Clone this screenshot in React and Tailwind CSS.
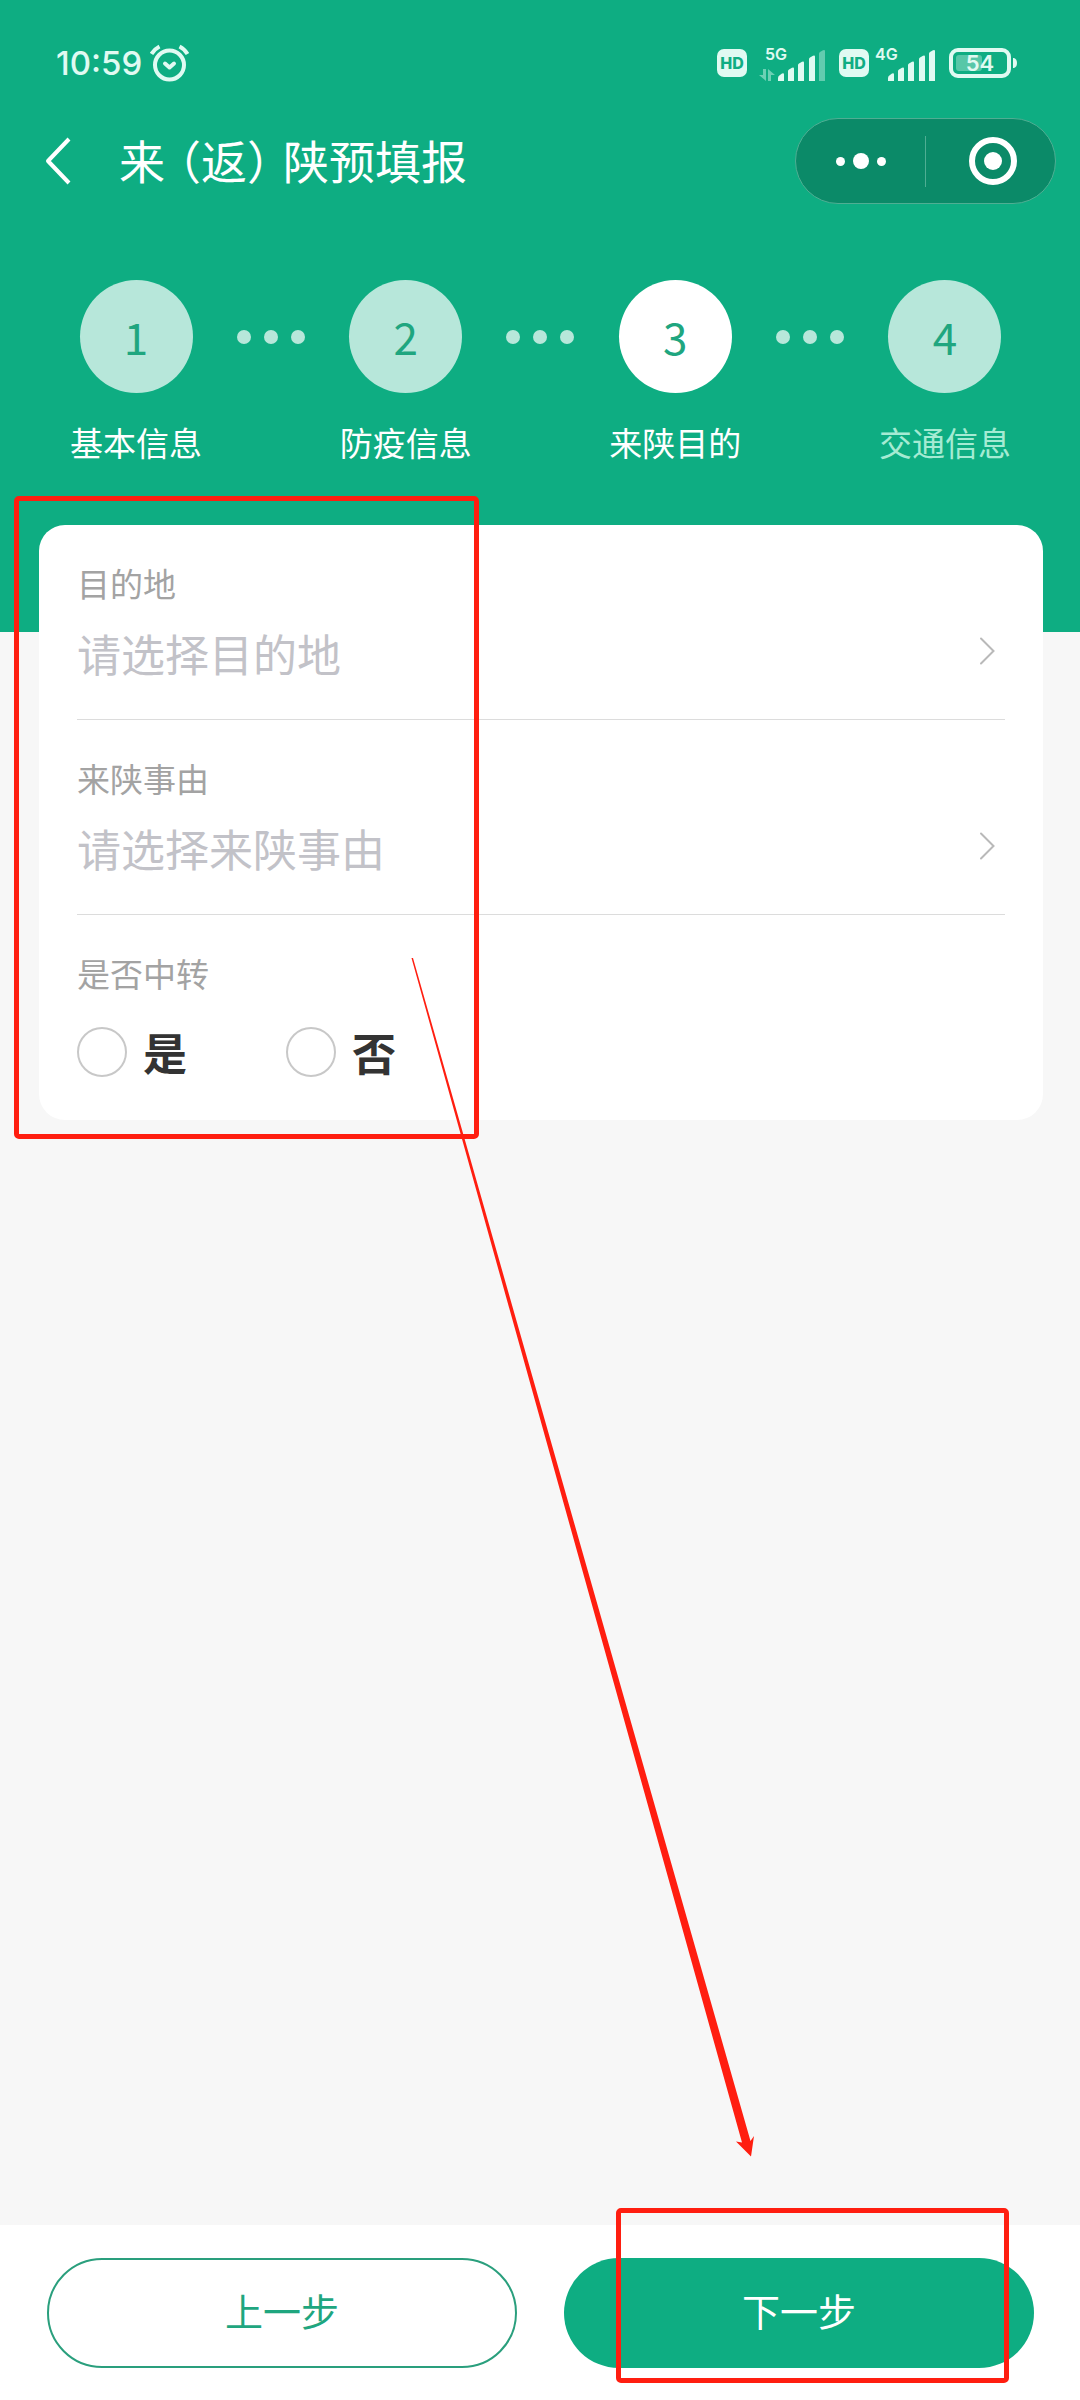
import React, { useState } from 'react';

const steps = [
  { id: 1, label: '基本信息' },
  { id: 2, label: '防疫信息' },
  { id: 3, label: '来陕目的' },
  { id: 4, label: '交通信息' },
];

const CURRENT_STEP = 3;

const AlarmIcon = () => (
  <svg className="w-10 h-[38px]" viewBox="0 0 40 38" fill="none" stroke="currentColor" strokeLinecap="round" strokeLinejoin="round">
    <circle cx="19.500" cy="21" r="14.5" strokeWidth="4" />
    <path d="M15 19.500l4.500 4 4.500-4" strokeWidth="4" />
    <path d="M1.500 10Q4.500 5 9.500 2.500M37.500 10Q34.500 5 29.500 2.500" strokeWidth="4" strokeLinecap="butt" />
  </svg>
);

const HdBadge = () => (
  <span className="flex items-center justify-center w-[30px] h-7 rounded-[7px] bg-[#e0faf2] text-[#0fad83] text-[16px] leading-none font-extrabold font-[Inter,sans-serif]">
    HD
  </span>
);

const Signal = ({ type, weak }) => (
  <svg className="w-[68px] h-9" viewBox="0 0 68 36" fill="currentColor">
    <text x="6" y="15" fontSize="16" fontWeight="600" fontFamily="Inter, sans-serif">{type}</text>
    {weak && (
      <path d="M0 30h4v-6h3v12zM9 24v12h3v-6h4z" opacity="0.45" />
    )}
    <path d="M19 36v-3q0-2 2-3l2-1.500q2-1 2 1v6.500z" />
    <path d="M29 36V26q0-1 1-1.500l3-1.700q2-1 2 1V36z" />
    <path d="M39 36V20q0-1 1-1.500l3-1.700q2-1 2 1V36z" />
    <path d="M50 36V14q0-1 1-1.500l3-1.700q2-1 2 1V36z" />
    <path d="M60 36V8.500q0-1 1-1.500l3-1.700q2-1 2 1V36z" opacity={weak ? 0.4 : 1} />
  </svg>
);

const Battery = () => (
  <svg className="w-[68px] h-[30px]" viewBox="0 0 68 30" fill="none">
    <rect x="2" y="2" width="58" height="26" rx="7" stroke="currentColor" strokeWidth="4" />
    <rect x="7" y="7" width="26" height="16" rx="3" fill="currentColor" opacity="0.35" />
    <path d="M64 10h1q3 1 3 5t-3 5h-1z" fill="currentColor" />
    <text x="31" y="23" textAnchor="middle" fontSize="22" fontWeight="600" fontFamily="Inter, sans-serif" fill="currentColor">54</text>
  </svg>
);

const SelectField = ({ id, label, placeholder, options }) => (
  <div className="pt-[34px] pb-[33px] border-b border-[#dcdcdc]">
    <label htmlFor={id} className="block text-[33px] leading-[48px] text-[#a3a3a3]">{label}</label>
    <div className="grid items-center mt-[13px]">
      <select
        id={id}
        defaultValue=""
        className="col-start-1 row-start-1 w-full h-[66px] appearance-none bg-transparent text-[44px] leading-[66px] text-[#c2c2c8] outline-none"
      >
        <option value="">{placeholder}</option>
        {options.map((o) => (
          <option key={o} value={o}>{o}</option>
        ))}
      </select>
      <svg
        className="col-start-1 row-start-1 justify-self-end mr-[10px] mb-1 w-4 h-7 pointer-events-none"
        viewBox="0 0 16 28"
        fill="none"
        stroke="#b9b9b9"
        strokeWidth="2"
        strokeLinecap="round"
      >
        <path d="M2 1.500l12.500 12.500L2 26.500" />
      </svg>
    </div>
  </div>
);

const App = () => {
  const [transfer, setTransfer] = useState('');

  return (
    <div className="relative flex flex-col min-h-screen overflow-hidden bg-[#f7f7f7] font-['Noto_Sans_CJK_SC',sans-serif]">
      <header className="bg-[#0ead82] pt-10 pb-[166px] text-white">
        {/* Status bar */}
        <div className="flex items-center justify-between h-[46px] pl-14 pr-[63px] text-[#e0faf2]">
          <div className="flex items-center gap-2">
            <span className="text-[33px] leading-none font-medium font-[Inter,sans-serif]">10:59</span>
            <AlarmIcon />
          </div>
          <div className="flex items-center">
            <HdBadge />
            <span className="ml-3"><Signal type="5G" weak /></span>
            <span className="ml-3"><HdBadge /></span>
            <Signal type="4G" />
            <span className="ml-3"><Battery /></span>
          </div>
        </div>

        {/* Title bar */}
        <div className="flex items-center h-[86px] mt-8 pl-11 pr-6">
          <button type="button" aria-label="返回" className="w-7 h-12">
            <svg className="w-7 h-12" viewBox="0 0 28 48" fill="none" stroke="currentColor" strokeWidth="4" strokeLinejoin="round">
              <path d="M25 2L4 24l21 22" />
            </svg>
          </button>
          <h1 className="ml-[47px] pb-1 text-[46px] leading-[60px]">
            来<span className="ml-[13px] [font-feature-settings:'halt']">（</span>返<span className="mr-[13px] [font-feature-settings:'halt']">）</span>陕预填报
          </h1>
          <div className="flex items-center w-[261px] h-[86px] ml-auto rounded-full border border-[#4fae93] bg-[#0b8a68]">
            <button type="button" aria-label="更多" className="flex flex-1 items-center justify-center gap-2">
              <span className="w-[9px] h-[9px] rounded-full bg-white" />
              <span className="w-4 h-4 rounded-full bg-white" />
              <span className="w-[9px] h-[9px] rounded-full bg-white" />
            </button>
            <span className="w-px h-[51px] bg-[#4fae93]" />
            <button type="button" aria-label="关闭" className="flex flex-1 items-center justify-center">
              <span className="flex items-center justify-center w-12 h-12 ml-1 rounded-full border-6 border-white">
                <span className="w-[18px] h-[18px] rounded-full bg-white" />
              </span>
            </button>
          </div>
        </div>

        {/* Steps */}
        <ol className="flex justify-between mt-[76px] pl-[70px] pr-[69px]">
          {steps.map((step, idx) => (
            <React.Fragment key={step.id}>
              {idx > 0 && (
                <li aria-hidden="true" className="flex items-center gap-[13px] h-[113px]">
                  <span className="w-[14px] h-[14px] rounded-full bg-[#b7e7da]" />
                  <span className="w-[14px] h-[14px] rounded-full bg-[#b7e7da]" />
                  <span className="w-[14px] h-[14px] rounded-full bg-[#b7e7da]" />
                </li>
              )}
              <li className="flex flex-col items-center">
                <span
                  className={`flex items-center justify-center w-[113px] h-[113px] pb-0.5 rounded-full text-[44px] leading-none text-[#1fa67f] ${
                    step.id === CURRENT_STEP ? 'bg-white' : 'bg-[#b7e7da]'
                  }`}
                >
                  {step.id}
                </span>
                <span className={`mt-[25px] text-[33px] leading-[48px] ${step.id > CURRENT_STEP ? 'text-[#a5ebd3]' : 'text-white'}`}>
                  {step.label}
                </span>
              </li>
            </React.Fragment>
          ))}
        </ol>
      </header>

      {/* Form */}
      <main className="flex-1">
        <form className="relative -mt-[107px] ml-[39px] mr-[37px] px-[38px] pb-[43px] rounded-[26px] bg-white">
          <SelectField id="destination" label="目的地" placeholder="请选择目的地" options={['西安市', '宝鸡市', '咸阳市']} />
          <SelectField id="reason" label="来陕事由" placeholder="请选择来陕事由" options={['探亲', '工作', '旅游']} />
          <fieldset className="pt-[34px]">
            <legend className="float-left w-full text-[33px] leading-[48px] text-[#a3a3a3]">是否中转</legend>
            <div className="clear-both flex gap-[99px] pt-[30px]">
              {['是', '否'].map((value) => (
                <label key={value} className="flex items-center gap-4 h-[50px] text-[44px] leading-[50px] font-bold text-[#333]">
                  <input
                    type="radio"
                    name="transfer"
                    value={value}
                    checked={transfer === value}
                    onChange={() => setTransfer(value)}
                    className="w-[50px] h-[50px] appearance-none rounded-full border-2 border-[#c8c8c8] checked:border-[14px] checked:border-[#0ead82]"
                  />
                  {value}
                </label>
              ))}
            </div>
          </fieldset>
          <div className="absolute -left-[25px] -top-[29px] w-[465px] h-[643px] rounded-[5px] border-5 border-[#ff1e10] pointer-events-none" />
        </form>
      </main>

      <footer className="relative grid grid-cols-2 gap-[47px] pl-[47px] pr-[46px] pt-[33px] pb-8 bg-white">
        <button type="button" className="h-[110px] pb-2 rounded-full border-2 border-[#2a9f7d] bg-white text-[38px] text-[#1fa67f]">
          上一步
        </button>
        <button type="button" className="h-[110px] pb-2 rounded-full bg-[#0ead82] text-[38px] text-white">
          下一步
        </button>
        <div className="absolute right-[71px] -top-[17px] w-[393px] h-[175px] rounded-[5px] border-5 border-[#ff1e10] pointer-events-none" />
      </footer>

      {/* Arrow from the form to the next button */}
      <svg className="absolute left-[400px] top-[950px] w-[360px] h-[1210px] pointer-events-none" viewBox="0 0 360 1210" fill="#ff1e10">
        <path d="M11.500 8h1.500L350.500 1191l3.500-5-3 20.500-15-15 6 1z" />
      </svg>
    </div>
  );
};

export default App;
